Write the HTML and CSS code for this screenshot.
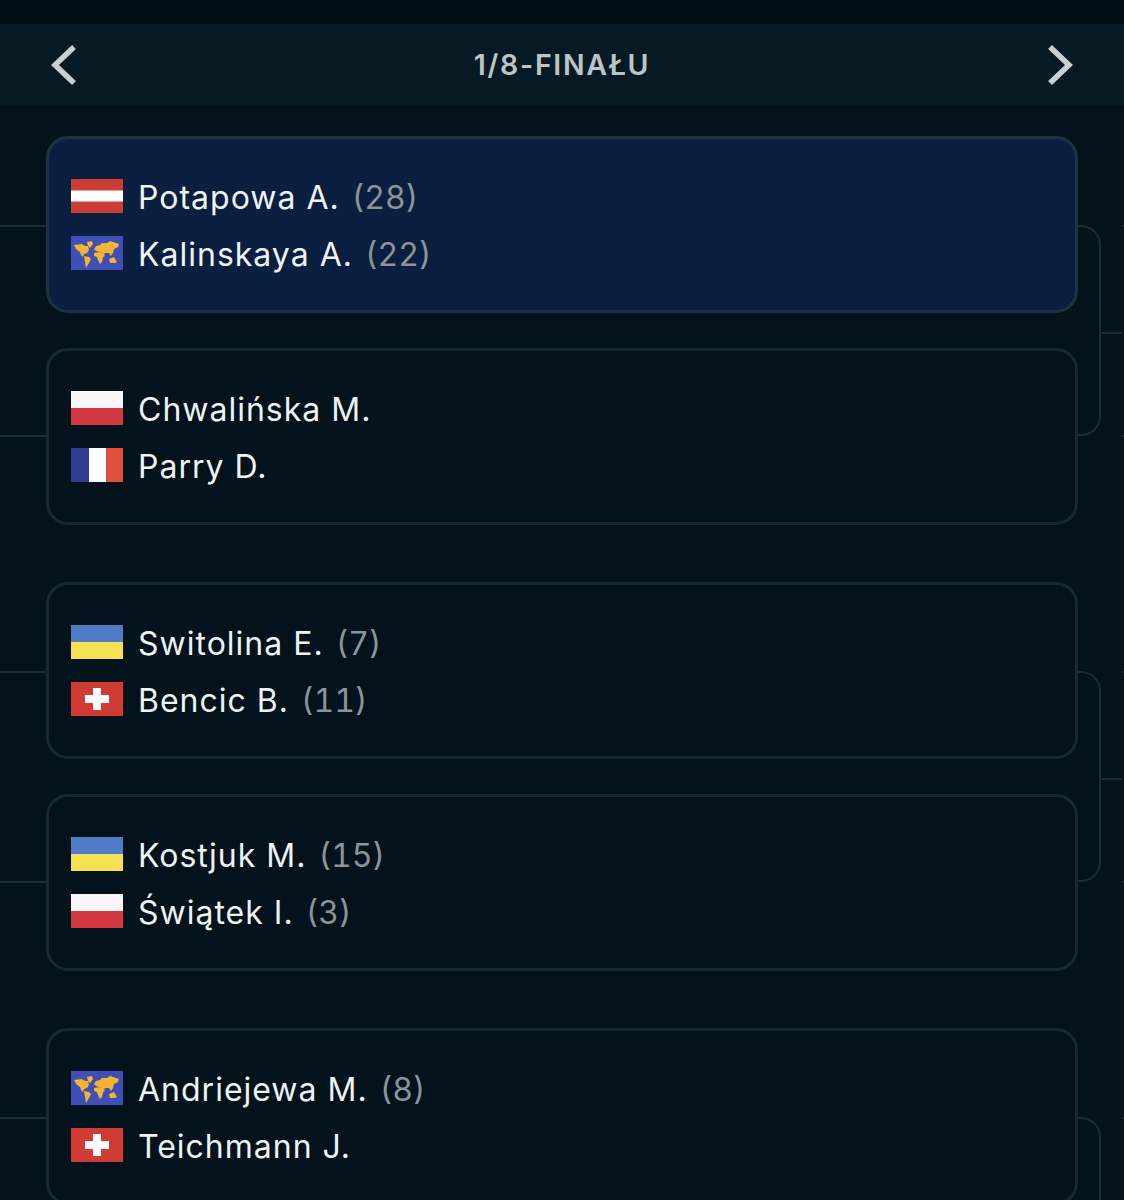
FILE: index.html
```html
<!DOCTYPE html>
<html lang="pl">
<head>
  <meta charset="UTF-8" />
  <meta name="viewport" content="width=device-width, initial-scale=1.0" />
  <title>Drabinka | 1/8-finału</title>
  <link rel="stylesheet" href="styles.css">
</head>
<body>
  <svg class="defs" width="0" height="0" aria-hidden="true">
    <symbol id="flag-at" viewBox="0 0 52 34">
      <rect width="52" height="34" fill="#c93d35"/>
      <rect y="11.5" width="52" height="11" fill="#fff"/>
    </symbol>
    <symbol id="flag-pl" viewBox="0 0 52 34">
      <rect width="52" height="34" fill="#d2383f"/>
      <rect width="52" height="17" fill="#f7f5f5"/>
    </symbol>
    <symbol id="flag-fr" viewBox="0 0 52 34">
      <rect width="18" height="34" fill="#2f3d92"/>
      <rect x="18" width="17" height="34" fill="#fff"/>
      <rect x="35" width="17" height="34" fill="#e04e3c"/>
    </symbol>
    <symbol id="flag-ua" viewBox="0 0 52 34">
      <rect width="52" height="17" fill="#4f7cc6"/>
      <rect y="17" width="52" height="17" fill="#f6e154"/>
    </symbol>
    <symbol id="flag-ch" viewBox="0 0 52 34">
      <rect width="52" height="34" fill="#d03b34"/>
      <path d="M22 6h8v7h8v8h-8v7h-8v-7h-8v-8h8z" fill="#fff"/>
    </symbol>
    <symbol id="flag-world" viewBox="0 0 52 34">
      <rect width="52" height="34" fill="#3f4fb6"/>
      <g fill="#f2b632">
        <path d="M3 9l8-1 3 2 3 0 1 4-2 3-3 1-1 3-2-2-1-3-4-3z"/>
        <path d="M16 6l5-1 1 3-3 4-2-2z"/>
        <path d="M13 20l5 1 2 2-2 4-3 5-1-6z"/>
        <path d="M23 13l2-3 4-1 2-2 5 0 3-2 9 3-1 3-4 2-1 4-2 3-2-3-3 0-2 1-4-2-4-1z"/>
        <path d="M23 17l5-1 4 1 2 3-2 1-1 5-2 2-2-4-1-3-3-1z"/>
        <path d="M38 23l5-2 3 5-2 1-5 0z"/>
      </g>
    </symbol>
  </svg>

  <div class="status-strip"></div>

  <header class="round-nav">
    <svg class="chevron" viewBox="0 0 30 44"><path d="M25 4L6 22l19 18"/></svg>
    <h1>1/8-FINAŁU</h1>
    <svg class="chevron" viewBox="0 0 30 44"><path d="M5 4l19 18L5 40"/></svg>
  </header>

  <main class="bracket">
    <section class="pair">
      <div class="match active">
        <div class="player"><svg class="flag"><use href="#flag-at"/></svg><span>Potapowa A.</span><span class="seed">(28)</span></div>
        <div class="player"><svg class="flag"><use href="#flag-world"/></svg><span>Kalinskaya A.</span><span class="seed">(22)</span></div>
      </div>
      <div class="match">
        <div class="player"><svg class="flag"><use href="#flag-pl"/></svg><span>Chwalińska M.</span></div>
        <div class="player"><svg class="flag"><use href="#flag-fr"/></svg><span>Parry D.</span></div>
      </div>
      <div class="link"></div>
    </section>

    <section class="pair">
      <div class="match">
        <div class="player"><svg class="flag"><use href="#flag-ua"/></svg><span>Switolina E.</span><span class="seed">(7)</span></div>
        <div class="player"><svg class="flag"><use href="#flag-ch"/></svg><span>Bencic B.</span><span class="seed">(11)</span></div>
      </div>
      <div class="match">
        <div class="player"><svg class="flag"><use href="#flag-ua"/></svg><span>Kostjuk M.</span><span class="seed">(15)</span></div>
        <div class="player"><svg class="flag"><use href="#flag-pl"/></svg><span>Świątek I.</span><span class="seed">(3)</span></div>
      </div>
      <div class="link"></div>
    </section>

    <section class="pair">
      <div class="match">
        <div class="player"><svg class="flag"><use href="#flag-world"/></svg><span>Andriejewa M.</span><span class="seed">(8)</span></div>
        <div class="player"><svg class="flag"><use href="#flag-ch"/></svg><span>Teichmann J.</span></div>
      </div>
      <div class="match"></div>
      <div class="link"></div>
    </section>
  </main>
</body>
</html>
```

FILE: styles.css
```css
html, body {
  height: 1200px;
  overflow: hidden;
}
body {
  margin: 0;
  background: #03121b;
  color: #eef3f6;
  font-family: Inter, "Liberation Sans", sans-serif;
}
.defs {
  position: absolute;
}
.status-strip {
  height: 24px;
  background: #020e15;
}
.round-nav {
  height: 81px;
  padding: 0 49px;
  display: flex;
  align-items: center;
  justify-content: space-between;
  background: #071a23;
}
.round-nav h1 {
  margin: 0;
  font-size: 28.5px;
  font-weight: 600;
  letter-spacing: 1.7px;
  color: #bcc4c7;
}
.chevron {
  width: 30px;
  height: 44px;
}
.chevron path {
  fill: none;
  stroke: #c9d0d2;
  stroke-width: 5.5;
}
.bracket {
  padding: 31px 46px 0;
  display: flex;
  flex-direction: column;
  gap: 57px;
}
.pair {
  position: relative;
  display: flex;
  flex-direction: column;
  gap: 35px;
}
.match {
  position: relative;
  box-sizing: border-box;
  height: 177px;
  padding: 0 22px;
  display: flex;
  flex-direction: column;
  justify-content: center;
  gap: 23px;
  border: 3px solid #172a34;
  border-radius: 22px;
}
.match.active {
  background: #0a1f3f;
  border-color: #1d3345;
}
/* line in from the previous round */
.match::before {
  content: "";
  position: absolute;
  left: -49px;
  top: 50%;
  width: 46px;
  height: 2px;
  background: #1a2d37;
}
/* start of the next column's line, only a sliver is on screen */
.match::after {
  content: "";
  position: absolute;
  left: calc(100% + 47px);
  top: 50%;
  width: 4px;
  height: 2px;
  background: #1a2d37;
}
.match:nth-child(2)::before,
.match:nth-child(2)::after {
  top: calc(50% - 1.5px);
}
.player {
  height: 34px;
  display: flex;
  align-items: center;
  font-size: 32px;
  letter-spacing: 1px;
}
.player span {
  padding-top: 2px;
}
.flag {
  flex: none;
  width: 52px;
  height: 34px;
  margin-right: 15px;
}
.seed {
  margin-left: 12px;
  color: #8b9499;
  font-variant-numeric: tabular-nums;
  letter-spacing: 0;
}
.link {
  position: absolute;
  left: 100%;
  top: 89px;
  bottom: 89px;
  box-sizing: border-box;
  width: 23px;
  border: 2px solid #1a2d37;
  border-left: none;
  border-radius: 0 20px 20px 0;
}
.link::after {
  content: "";
  position: absolute;
  left: 21px;
  top: calc(50% + 1px);
  width: 24px;
  height: 2px;
  background: #1a2d37;
}
```
